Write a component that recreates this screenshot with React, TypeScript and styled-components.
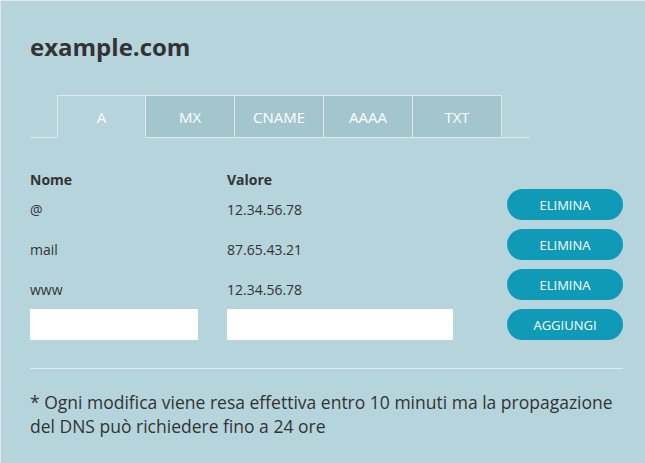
import styled, { createGlobalStyle } from "styled-components";

const GlobalStyle = createGlobalStyle`
    html, body {
        margin: 0;
        padding: 0;
        overflow: hidden;
        background: #b6d4dc;
    }
    * {
        box-sizing: border-box;
    }
`;

type DnsRecord = { name: string; value: string };

const tabs = ["A", "MX", "CNAME", "AAAA", "TXT"];
const records: DnsRecord[] = [
    { name: "@", value: "12.34.56.78" },
    { name: "mail", value: "87.65.43.21" },
    { name: "www", value: "12.34.56.78" },
];

const App = () => {
    return (
        <>
            <GlobalStyle />
            <Card>
                <Title>example.com</Title>
                <TabBar>
                    <TabSpacer $width={27} />
                    {tabs.map((t, i) => (
                        <Tab key={t} $active={i === 0}>
                            {t}
                        </Tab>
                    ))}
                    <TabSpacer $width={28} />
                </TabBar>
                <Table>
                    <HeaderRow>
                        <HeaderCell>Nome</HeaderCell>
                        <HeaderCell>Valore</HeaderCell>
                        <span />
                    </HeaderRow>
                    {records.map((r) => (
                        <Row key={r.name}>
                            <Cell>{r.name}</Cell>
                            <Cell>{r.value}</Cell>
                            <PillButton>ELIMINA</PillButton>
                        </Row>
                    ))}
                    <Row>
                        <Input $width={168} />
                        <Input $width={226} />
                        <PillButton>AGGIUNGI</PillButton>
                    </Row>
                </Table>
                <Divider />
                <Note>* Ogni modifica viene resa effettiva entro 10 minuti ma la propagazione del DNS può richiedere fino a 24 ore</Note>
            </Card>
        </>
    );
};

export default App;

// the card is cut off by the window on the right and bottom
const Card = styled.div`
    width: 100vw;
    height: 100vh;
    border-top: 1px solid #e2e8ea;
    border-left: 1px solid #e2e8ea;
    background: #b6d4dc;
    padding: 29px 0 0 29px;
    font-family: "Open Sans", "Liberation Sans", sans-serif;
    color: #333333;
`;

const Title = styled.h1`
    margin: 0;
    font-size: 24px;
    line-height: 34px;
    font-weight: 700;
    color: #333333;
`;

const TabBar = styled.div`
    display: flex;
    margin-top: 31px;
    height: 43px;
`;

const TabSpacer = styled.div<{ $width: number }>`
    width: ${(p) => p.$width}px;
    border-bottom: 1px solid #e2e8ea;
`;

const Tab = styled.div<{ $active: boolean }>`
    width: 89px;
    height: 43px;
    display: flex;
    align-items: center;
    justify-content: center;
    font-size: 15px;
    color: #ffffff;
    background: ${(p) => (p.$active ? "#b6d4dc" : "#a3c5ce")};
    border: 1px solid #e2e8ea;
    border-bottom-color: ${(p) => (p.$active ? "transparent" : "#e2e8ea")};
    & + & {
        border-left: none;
    }
`;

const Table = styled.div`
    width: 593px;
    margin-top: 32px;
    display: flex;
    flex-direction: column;
    gap: 9px;
`;

const HeaderRow = styled.div`
    display: grid;
    grid-template-columns: 197px 280px 116px;
    height: 20px;
    margin-bottom: -10px;
`;

const HeaderCell = styled.div`
    font-size: 14px;
    font-weight: 700;
    line-height: 20px;
`;

const Row = styled.div`
    display: grid;
    grid-template-columns: 197px 280px 116px;
    height: 31px;
`;

const Cell = styled.div`
    font-size: 14px;
    line-height: 20px;
    padding-top: 11px;
`;

const Input = styled.input<{ $width: number }>`
    width: ${(p) => p.$width}px;
    height: 31px;
    border: none;
    outline: none;
    background: #ffffff;
    padding: 0 8px;
    font-family: inherit;
    font-size: 14px;
`;

const PillButton = styled.button`
    width: 116px;
    height: 31px;
    border: none;
    border-radius: 16px;
    background: #0f9ab8;
    color: #ffffff;
    font-family: "Open Sans", "Liberation Sans", sans-serif;
    font-size: 13px;
    padding: 0;
    cursor: pointer;
`;

const Divider = styled.hr`
    width: 593px;
    margin: 28px 0 0 0;
    border: none;
    border-top: 1px solid #e2ecee;
`;

const Note = styled.p`
    width: 600px;
    margin: 21px 0 0 0;
    font-size: 17.5px;
    line-height: 24px;
    color: #333333;
`;
